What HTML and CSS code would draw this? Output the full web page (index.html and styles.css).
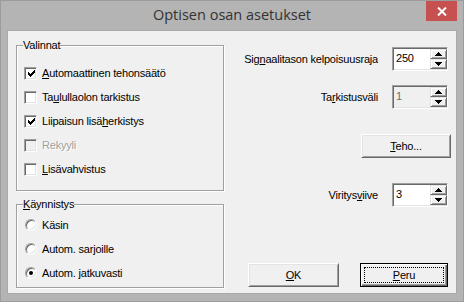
FILE: index.html
```html
<!DOCTYPE html>
<html lang="fi">

<head>
    <meta charset="UTF-8">
    <title>Optisen osan asetukset</title>
    <link rel="stylesheet" href="styles.css">
</head>

<body>
    <div class="window">

        <!-- title bar -->
        <div class="titlebar">
            <span></span>
            <span class="title">Optisen osan asetukset</span>
            <span class="close">
                <svg width="10" height="9" viewBox="0 0 10 9">
                    <path d="M1 0.5 L9 8.5 M9 0.5 L1 8.5" stroke="#fff" stroke-width="2" fill="none" />
                </svg>
            </span>
        </div>

        <div class="client">

            <!-- left column: option groups -->
            <div class="left">
                <fieldset class="group group-options">
                    <legend>Valinnat</legend>
                    <div class="row">
                        <span class="check"><svg class="tick" width="7" height="7" viewBox="0 0 7 7"><path d="M0 2h1v3h-1z M1 3h1v3h-1z M2 4h1v3h-1z M3 3h1v3h-1z M4 2h1v3h-1z M5 1h1v3h-1z M6 0h1v3h-1z" /></svg></span>
                        <span><u>A</u>utomaattinen tehonsäätö</span>
                    </div>
                    <div class="row">
                        <span class="check"></span>
                        <span>Ta<u>u</u>lullaolon tarkistus</span>
                    </div>
                    <div class="row">
                        <span class="check"><svg class="tick" width="7" height="7" viewBox="0 0 7 7"><path d="M0 2h1v3h-1z M1 3h1v3h-1z M2 4h1v3h-1z M3 3h1v3h-1z M4 2h1v3h-1z M5 1h1v3h-1z M6 0h1v3h-1z" /></svg></span>
                        <span>Liipaisun lisä<u>h</u>erkistys</span>
                    </div>
                    <div class="row disabled">
                        <span class="check"></span>
                        <span>Rekyyli</span>
                    </div>
                    <div class="row">
                        <span class="check"></span>
                        <span><u>L</u>isävahvistus</span>
                    </div>
                </fieldset>

                <fieldset class="group group-start">
                    <legend><u>K</u>äynnistys</legend>
                    <div class="row">
                        <span class="radio"></span>
                        <span>Käsin</span>
                    </div>
                    <div class="row">
                        <span class="radio"></span>
                        <span>Autom. sarjoille</span>
                    </div>
                    <div class="row">
                        <span class="radio"><span class="dot"></span></span>
                        <span>Autom. jatkuvasti</span>
                    </div>
                </fieldset>
            </div>

            <!-- right column: values and buttons -->
            <div class="right">
                <div class="field field-signal">
                    <span>Sig<u>n</u>aalitason kelpoisuusraja</span>
                    <div class="spin">
                        <span class="spin-value">250</span>
                        <span class="spin-btns">
                            <span class="spin-btn"><svg width="7" height="4" viewBox="0 0 7 4"><path d="M3 0h1v1h-1z M2 1h3v1h-3z M1 2h5v1h-5z M0 3h7v1h-7z" /></svg></span>
                            <span class="spin-btn"><svg width="7" height="4" viewBox="0 0 7 4"><path d="M0 0h7v1h-7z M1 1h5v1h-5z M2 2h3v1h-3z M3 3h1v1h-1z" /></svg></span>
                        </span>
                    </div>
                </div>

                <div class="field field-interval">
                    <span>Ta<u>r</u>kistusväli</span>
                    <div class="spin spin-disabled">
                        <span class="spin-value">1</span>
                        <span class="spin-btns">
                            <span class="spin-btn"><svg width="7" height="4" viewBox="0 0 7 4"><path d="M3 0h1v1h-1z M2 1h3v1h-3z M1 2h5v1h-5z M0 3h7v1h-7z" /></svg></span>
                            <span class="spin-btn"><svg width="7" height="4" viewBox="0 0 7 4"><path d="M0 0h7v1h-7z M1 1h5v1h-5z M2 2h3v1h-3z M3 3h1v1h-1z" /></svg></span>
                        </span>
                    </div>
                </div>

                <button class="btn btn-power"><u>T</u>eho...</button>

                <div class="field field-delay">
                    <span>Viritys<u>v</u>iive</span>
                    <div class="spin">
                        <span class="spin-value">3</span>
                        <span class="spin-btns">
                            <span class="spin-btn"><svg width="7" height="4" viewBox="0 0 7 4"><path d="M3 0h1v1h-1z M2 1h3v1h-3z M1 2h5v1h-5z M0 3h7v1h-7z" /></svg></span>
                            <span class="spin-btn"><svg width="7" height="4" viewBox="0 0 7 4"><path d="M0 0h7v1h-7z M1 1h5v1h-5z M2 2h3v1h-3z M3 3h1v1h-1z" /></svg></span>
                        </span>
                    </div>
                </div>

                <!-- dialog buttons -->
                <div class="actions">
                    <button class="btn btn-ok"><u>O</u>K</button>
                    <button class="btn btn-cancel"><span class="focus"><u>P</u>eru</span></button>
                </div>
            </div>

        </div>
    </div>
</body>

</html>
```

FILE: styles.css
```css
body {
    margin: 0;
    font-family: "Liberation Sans", Arial, sans-serif;
    font-size: 11px;
    letter-spacing: -0.2px;
    color: #000;
}

.window {
    width: 464px;
    height: 302px;
    box-sizing: border-box;
    background: #b4b4b4;
    border: 1px solid #9c9c9c;
    display: flex;
    flex-direction: column;
}

/* title bar */
.titlebar {
    height: 29px;
    flex: none;
    display: grid;
    grid-template-columns: 1fr auto 1fr;
    align-items: start;
}

.title {
    font-family: "Open Sans", sans-serif;
    font-size: 14.5px;
    letter-spacing: 0;
    line-height: 27px;
    color: #333;
}

.close {
    justify-self: end;
    width: 31px;
    height: 20px;
    margin-right: 6px;
    background: #c75050;
    display: flex;
    align-items: center;
    justify-content: center;
}

/* dialog body */
.client {
    height: 264px;
    box-sizing: border-box;
    margin: 0 6px;
    border: 1px solid #a9a9a9;
    background: #f0f0f0;
    display: flex;
    padding: 7px 8px 6px 8px;
}

.left {
    width: 208px;
    flex: none;
    display: flex;
    flex-direction: column;
    gap: 6px;
}

.group {
    margin: 0;
    padding: 0 7px;
    min-width: 0;
    border: 1px solid #a0a0a0;
    box-shadow: 1px 1px 0 #fff, inset 1px 1px 0 #fff;
}

.group legend {
    padding: 0;
    margin-left: -1px;
    line-height: 14px;
    background: #f0f0f0;
}

.group-options {
    padding-top: 9px;
    padding-bottom: 9px;
}

.group-start {
    padding-top: 2px;
    padding-bottom: 2px;
}

.row {
    height: 24px;
    display: flex;
    align-items: center;
    gap: 5px;
}

.disabled {
    color: #a0a0a0;
    text-shadow: 1px 1px 0 #fff;
}

/* classic check box */
.check {
    width: 13px;
    height: 13px;
    box-sizing: border-box;
    border: 1px solid;
    border-color: #a0a0a0 #fff #fff #a0a0a0;
    box-shadow: inset 1px 1px 0 #696969, inset -1px -1px 0 #e3e3e3;
    background: #fff;
    display: flex;
    align-items: center;
    justify-content: center;
}

.disabled .check {
    background: #f0f0f0;
}

.tick {
    display: block;
    margin: 1px 0 0 1px;
}

/* classic radio button */
.radio {
    width: 12px;
    height: 12px;
    margin-left: 1px;
    box-sizing: border-box;
    border-radius: 50%;
    border: 1px solid;
    border-color: #a0a0a0 #fff #fff #a0a0a0;
    box-shadow: inset 1px 1px 0 #696969, inset -1px -1px 0 #e3e3e3;
    background: #fff;
    display: flex;
    align-items: center;
    justify-content: center;
}

.dot {
    width: 4px;
    height: 4px;
    border-radius: 50%;
    background: #000;
}

/* right column */
.right {
    flex: 1;
    display: flex;
    flex-direction: column;
}

.field {
    height: 24px;
    display: flex;
    justify-content: flex-end;
    align-items: center;
    gap: 14px;
}

.field-signal {
    margin-top: 9px;
}

.field-interval {
    margin-top: 14px;
}

.field-delay {
    margin-top: 25px;
}

.spin {
    width: 56px;
    height: 24px;
    box-sizing: border-box;
    display: flex;
    padding: 1px 0 1px 1px;
    border: 1px solid;
    border-color: #a0a0a0 #fff #fff #a0a0a0;
    box-shadow: inset 1px 1px 0 #696969, inset -1px -1px 0 #e3e3e3;
    background: #fff;
}

.spin-value {
    flex: 1;
    padding-left: 2px;
    line-height: 18px;
}

.spin-disabled {
    background: #f0f0f0;
}

.spin-disabled .spin-value {
    color: #6d6d6d;
}

.spin-btns {
    width: 17px;
    display: flex;
    flex-direction: column;
}

.spin-btn {
    height: 10px;
    box-sizing: border-box;
    background: #f0f0f0;
    border: 1px solid;
    border-color: #e3e3e3 #696969 #696969 #e3e3e3;
    box-shadow: inset 1px 1px 0 #fff, inset -1px -1px 0 #a0a0a0;
    display: flex;
    align-items: center;
    justify-content: center;
}

.spin-btn svg {
    display: block;
}

/* push buttons */
.btn {
    height: 24px;
    box-sizing: border-box;
    padding: 0;
    font-family: inherit;
    font-size: 11px;
    letter-spacing: -0.2px;
    color: #000;
    background: #f0f0f0;
    border: 1px solid;
    border-color: #fff #696969 #696969 #fff;
    box-shadow: inset 1px 1px 0 #e3e3e3, inset -1px -1px 0 #a0a0a0;
}

.btn-power {
    width: 90px;
    margin-top: 25px;
    margin-right: -3px;
    align-self: flex-end;
}

.actions {
    margin-top: auto;
    display: flex;
    justify-content: flex-end;
    gap: 21px;
}

.btn-ok {
    width: 91px;
}

.btn-cancel {
    width: 88px;
    border: 1px solid #000;
    box-shadow: inset 1px 1px 0 #fff, inset -1px -1px 0 #696969, inset -2px -2px 0 #a0a0a0;
    padding: 3px;
}

.focus {
    display: block;
    height: 100%;
    box-sizing: border-box;
    border: 1px dotted #000;
    line-height: 14px;
}
```
